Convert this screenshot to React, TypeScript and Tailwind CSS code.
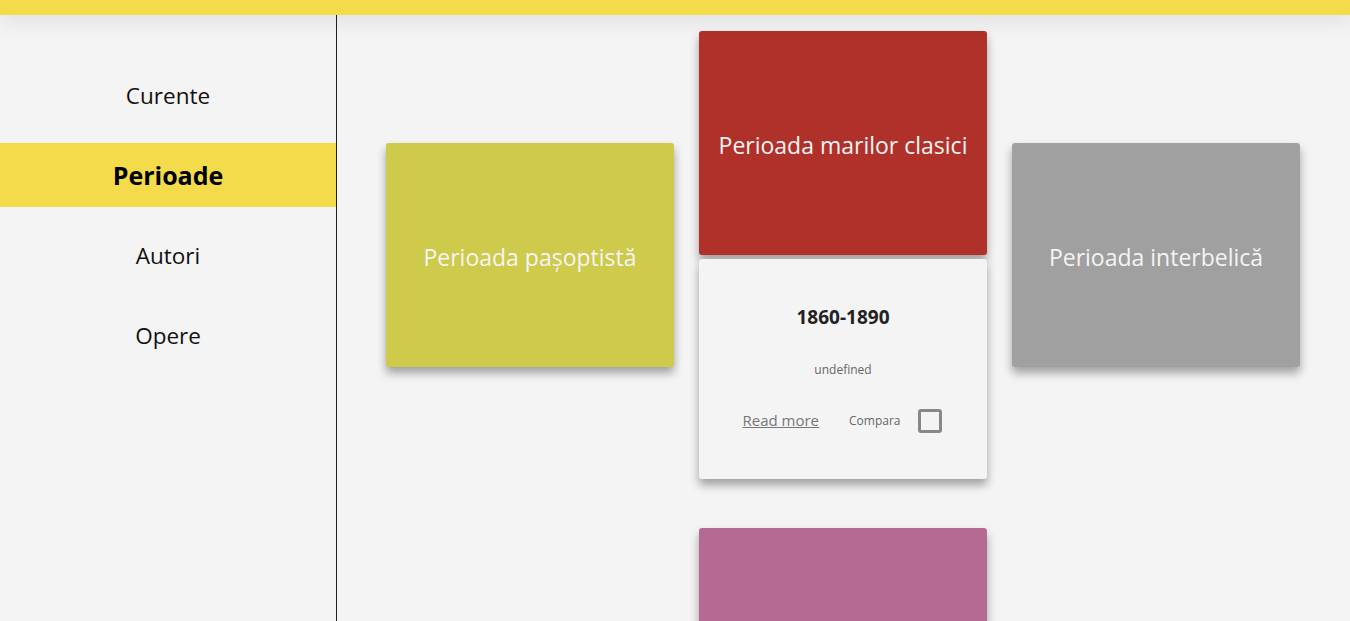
import { useState } from 'react'

const navItems = ['Curente', 'Perioade', 'Autori', 'Opere']

const Card = ({ title, color }: { title?: string; color: string }) => (
  <div
    className={`w-[288px] h-[224px] rounded-[3px] flex items-center justify-center pt-[5px] shadow-[0_6px_10px_rgba(0,0,0,0.35)] ${color}`}
  >
    {title && <span className="text-[23px] text-[#f4f4f4] px-2 text-center">{title}</span>}
  </div>
)

const App = () => {
  const [active] = useState('Perioade')
  const [checked, setChecked] = useState(false)

  return (
    <div className="h-[621px] overflow-hidden bg-[#f4f4f4] flex flex-col font-['Open_Sans',sans-serif]">
      <div className="h-[15px] bg-[#f4db4c] shrink-0 relative z-10 shadow-[0_4px_22px_rgba(0,0,0,0.12)]" />

      <div className="flex flex-1">
        <aside className="w-[337px] shrink-0 border-r border-[#222] pt-[48px] flex flex-col gap-4">
          {navItems.map((item) => (
            <div
              key={item}
              className={`h-16 flex items-center justify-center pt-[2px] ${
                item === active ? 'bg-[#f4db4c] font-bold text-black text-[25px]' : 'text-[#111] text-[22.5px]'
              }`}
            >
              {item}
            </div>
          ))}
        </aside>

        <main className="flex-1 flex gap-[25px] pt-4 pl-[49px]">
          <div className="mt-[112px]">
            <Card title="Perioada pașoptistă" color="bg-[#cdca4c]" />
          </div>

          <div className="flex flex-col">
            <Card title="Perioada marilor clasici" color="bg-[#b0302a]" />
            <div className="mt-1 w-[288px] h-[220px] rounded-[3px] bg-[#f4f4f4] shadow-[0_6px_10px_rgba(0,0,0,0.35)] flex flex-col items-center pt-[44px]">
              <p className="text-[19px] font-bold text-[#222]">1860-1890</p>
              <p className="mt-[29px] text-[12px] text-[#666]">undefined</p>
              <div className="mt-[30px] flex items-center pl-[-2px] mr-[2px]">
                <a href="#" className="text-[15px] text-[#777] underline">
                  Read more
                </a>
                <span className="ml-[30px] text-[12px] text-[#666]">Compara</span>
                <button
                  onClick={() => setChecked(!checked)}
                  className="ml-[17px] w-[24px] h-[24px] border-[3px] border-[#888] rounded-[3px]"
                />
              </div>
            </div>
            <div className="mt-[49px]">
              <Card color="bg-[#b56a92]" />
            </div>
          </div>

          <div className="mt-[112px]">
            <Card title="Perioada interbelică" color="bg-[#a0a0a0]" />
          </div>
        </main>
      </div>
    </div>
  )
}

export default App
